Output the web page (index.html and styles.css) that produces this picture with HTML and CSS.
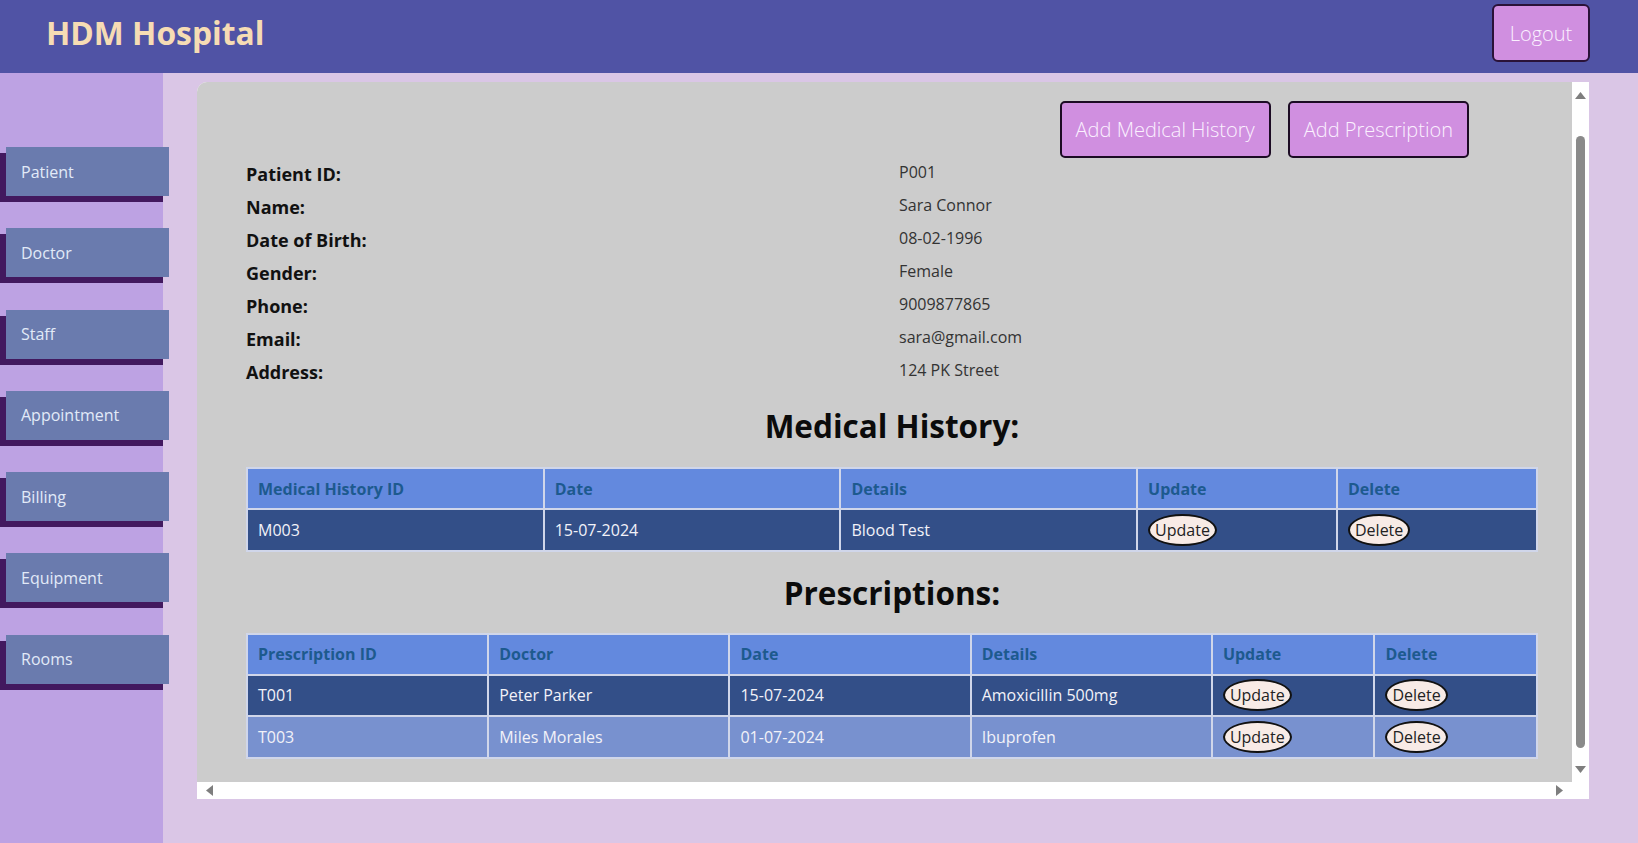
FILE: index.html
```html
<!DOCTYPE html>
<html lang="en">
<head>
<meta charset="utf-8">
<title>HDM Hospital</title>
<link rel="stylesheet" href="styles.css">
</head>
<body>
<header class="topbar">
  <h1 class="brand">HDM Hospital</h1>
  <button class="logout">Logout</button>
</header>
<div class="layout">
  <nav class="sidebar">
    <a class="nav-btn">Patient</a>
    <a class="nav-btn">Doctor</a>
    <a class="nav-btn">Staff</a>
    <a class="nav-btn">Appointment</a>
    <a class="nav-btn">Billing</a>
    <a class="nav-btn">Equipment</a>
    <a class="nav-btn">Rooms</a>
  </nav>
  <main class="main">
    <div class="panel">
      <div class="content">
        <div class="actions">
          <button class="action-btn">Add Medical History</button>
          <button class="action-btn">Add Prescription</button>
        </div>
        <div class="info">
          <span class="info-label">Patient ID:</span><span class="info-value">P001</span>
          <span class="info-label">Name:</span><span class="info-value">Sara Connor</span>
          <span class="info-label">Date of Birth:</span><span class="info-value">08-02-1996</span>
          <span class="info-label">Gender:</span><span class="info-value">Female</span>
          <span class="info-label">Phone:</span><span class="info-value">9009877865</span>
          <span class="info-label">Email:</span><span class="info-value">sara@gmail.com</span>
          <span class="info-label">Address:</span><span class="info-value">124 PK Street</span>
        </div>
        <h2 class="section-title first">Medical History:</h2>
        <table class="data">
          <colgroup>
            <col class="c23"><col class="c23"><col class="c23"><col class="c155"><col class="c155">
          </colgroup>
          <thead>
            <tr><th>Medical History ID</th><th>Date</th><th>Details</th><th>Update</th><th>Delete</th></tr>
          </thead>
          <tbody>
            <tr class="row-dark"><td>M003</td><td>15-07-2024</td><td>Blood Test</td><td><button class="pill">Update</button></td><td><button class="pill">Delete</button></td></tr>
          </tbody>
        </table>
        <h2 class="section-title second">Prescriptions:</h2>
        <table class="data">
          <colgroup>
            <col class="c187"><col class="c187"><col class="c187"><col class="c187"><col class="c126"><col class="c126">
          </colgroup>
          <thead>
            <tr><th>Prescription ID</th><th>Doctor</th><th>Date</th><th>Details</th><th>Update</th><th>Delete</th></tr>
          </thead>
          <tbody>
            <tr class="row-dark"><td>T001</td><td>Peter Parker</td><td>15-07-2024</td><td>Amoxicillin 500mg</td><td><button class="pill">Update</button></td><td><button class="pill">Delete</button></td></tr>
            <tr class="row-light"><td>T003</td><td>Miles Morales</td><td>01-07-2024</td><td>Ibuprofen</td><td><button class="pill">Update</button></td><td><button class="pill">Delete</button></td></tr>
          </tbody>
        </table>
      </div>
      <div class="vscroll">
        <span class="sb-btn sb-up"><svg width="11" height="7" viewBox="0 0 11 7"><polygon points="5.5,0 11,7 0,7" /></svg></span>
        <div class="vtrack"><div class="vthumb"></div></div>
        <span class="sb-btn sb-down"><svg width="11" height="7" viewBox="0 0 11 7"><polygon points="0,0 11,0 5.5,7" /></svg></span>
      </div>
      <div class="hscroll">
        <span class="sb-btn sb-left"><svg width="7" height="11" viewBox="0 0 7 11"><polygon points="7,0 7,11 0,5.5" /></svg></span>
        <span class="sb-btn sb-right"><svg width="7" height="11" viewBox="0 0 7 11"><polygon points="0,0 7,5.5 0,11" /></svg></span>
      </div>
      <div class="corner"></div>
    </div>
  </main>
</div>
</body>
</html>
```
FILE: styles.css
```css
* { box-sizing: border-box; }

html, body {
  margin: 0;
  padding: 0;
  height: 843px;
  overflow: hidden;
}

body {
  font-family: "Open Sans", "Noto Sans", sans-serif;
  background: #dac6e6;
  color: #111;
}

button { font: inherit; cursor: pointer; }

/* ---------- top bar ---------- */
.topbar {
  height: 73px;
  background: #5053a5;
  display: flex;
  justify-content: space-between;
  align-items: flex-start;
  padding: 0 48px 0 46px;
}

.brand {
  margin: 15px 0 0;
  font-size: 31.8px;
  line-height: 36px;
  font-weight: 700;
  color: #f6dcb4;
}

.logout {
  margin-top: 4px;
  width: 98px;
  height: 58px;
  background: #d08fe0;
  border: 2px solid #2a1238;
  border-radius: 6px;
  color: #fbf1ff;
  font-size: 20px;
  font-weight: 300;
  padding: 0;
}

/* ---------- layout ---------- */
.layout {
  display: flex;
  height: 770px;
}

.sidebar {
  width: 163px;
  flex: none;
  background: #bda2e3;
  padding-top: 74px;
  display: flex;
  flex-direction: column;
}

.nav-btn {
  display: flex;
  align-items: center;
  width: 163px;
  height: 49px;
  margin-left: 6px;
  margin-bottom: 32.3px;
  padding-left: 15px;
  background: #6a7bae;
  color: #e2eaf8;
  font-size: 16px;
  font-weight: 400;
  box-shadow: -6px 6px 0 #42195f;
  position: relative;
  z-index: 1;
}

.main {
  flex: 1;
  padding: 9px 49px 44px 34px;
}

.panel {
  height: 100%;
  display: grid;
  grid-template-columns: 1fr 17px;
  grid-template-rows: 1fr 17px;
  background: #ffffff;
  border-radius: 10px 0 0 0;
  overflow: hidden;
}

.content {
  background: #cccccc;
  overflow: hidden;
  padding: 19px 34px 0 49px;
}

/* ---------- actions ---------- */
.actions {
  display: flex;
  justify-content: flex-end;
  gap: 17px;
  margin-right: 69px;
  height: 57px;
}

.action-btn {
  height: 57px;
  padding: 0 14px;
  background: #d08fe0;
  border: 2px solid #1c0b24;
  border-radius: 5px;
  color: #fbf1ff;
  font-size: 20px;
  font-weight: 300;
}

/* ---------- info ---------- */
.info {
  display: grid;
  grid-template-columns: 653px 1fr;
  grid-auto-rows: 33px;
}

.info-label {
  font-size: 18px;
  font-weight: 700;
  line-height: 33px;
  color: #111;
}

.info-value {
  font-size: 16px;
  line-height: 29px;
  color: #333;
}

/* ---------- headings ---------- */
.section-title {
  text-align: center;
  font-size: 31.5px;
  line-height: 36px;
  font-weight: 700;
  color: #0b0b0b;
}

.section-title.first { margin: 19px 0 23px; }
.section-title.second { margin: 23px 0 22px; }

/* ---------- tables ---------- */
.data {
  width: 100%;
  border-collapse: collapse;
  table-layout: fixed;
  font-size: 16px;
}

.c23 { width: 23%; }
.c155 { width: 15.5%; }
.c187 { width: 18.7%; }
.c126 { width: 12.6%; }

.data th,
.data td {
  border: 2px solid #d0d6ea;
  padding: 0 10px;
  text-align: left;
  vertical-align: middle;
  white-space: nowrap;
}

.data th {
  height: 41px;
  background: #6389de;
  color: #1d5a8e;
  font-weight: 700;
}

.data td {
  height: 41.5px;
  color: #f2f2f8;
}

.row-dark td { background: #334f88; }
.row-light td { background: #7891cf; }

.pill {
  padding: 3px 5px;
  line-height: 22px;
  border: 2px solid #111;
  border-radius: 50%;
  background: #f8ebe6;
  color: #222;
  font-size: 16px;
}

/* ---------- fake scrollbars ---------- */
.vscroll {
  display: flex;
  flex-direction: column;
  background: #fff;
}

.hscroll {
  display: flex;
  justify-content: space-between;
  background: #fff;
}

.corner { background: #fff; }

.sb-btn {
  width: 17px;
  height: 17px;
  flex: none;
  display: flex;
  justify-content: center;
  align-items: center;
}

.sb-btn svg { fill: #7e7e7e; }

.sb-up { padding-top: 9px; }
.sb-down { padding-bottom: 9px; }
.sb-left { padding-left: 8px; }
.sb-right { padding-right: 9px; }

.vtrack {
  flex: 1;
  padding-top: 37px;
}

.vthumb {
  width: 9px;
  height: 612px;
  margin-left: 4px;
  border-radius: 5px;
  background: #8a8a8a;
}
```
